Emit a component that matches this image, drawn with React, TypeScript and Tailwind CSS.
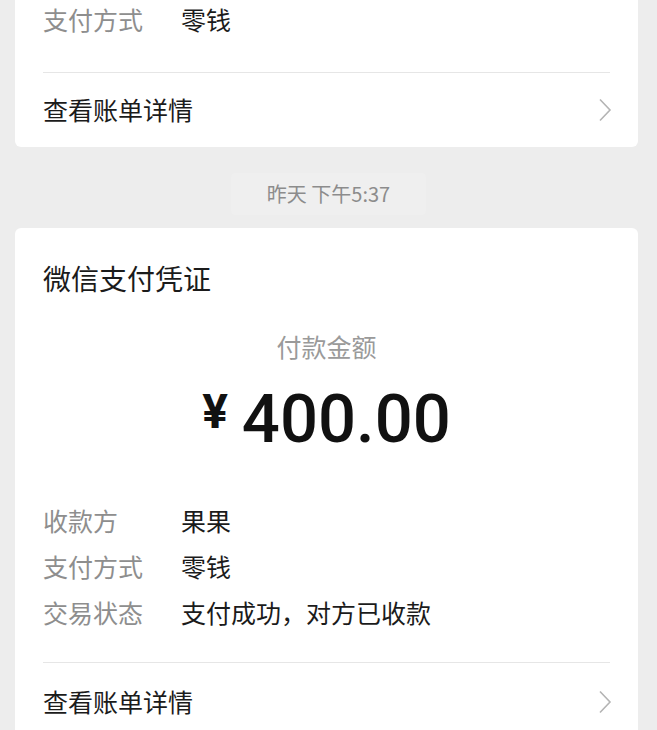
import React from "react";

const CJK = { fontFamily: '"Noto Sans CJK SC", "Noto Sans", sans-serif' };

function Chevron() {
  return (
    <svg width="14" height="24" viewBox="0 0 14 24" className="shrink-0">
      <polyline points="2,1.5 12,12 2,22.5" fill="none" stroke="#b4b4b4" strokeWidth="1.6" strokeLinejoin="miter" />
    </svg>
  );
}

function Row({ label, value }: { label: string; value: string }) {
  return (
    <div className="flex h-[46px] items-center text-[25px]">
      <div className="w-[138px] shrink-0 text-[#8e8e8e]">{label}</div>
      <div className="text-[#1b1b1b]">{value}</div>
    </div>
  );
}

export default function App() {
  return (
    <div className="min-h-[730px] w-full overflow-hidden bg-[#ededed]" style={CJK}>
      {/* Top card (continues above the viewport) */}
      <div className="ml-[15px] mr-[19px] rounded-b-[6px] bg-white px-[28px]">
        <div className="flex h-[40px] items-center text-[25px]">
          <div className="w-[138px] shrink-0 text-[#8e8e8e]">支付方式</div>
          <div className="text-[#1b1b1b]">零钱</div>
        </div>
        <div className="mt-[32px] h-px bg-[#e6e6e6]" />
        <div className="flex h-[74px] items-center justify-between text-[25px] text-[#1b1b1b]">
          <span>查看账单详情</span>
          <span className="mr-[-2px]"><Chevron /></span>
        </div>
      </div>

      {/* Timestamp */}
      <div className="mt-[26px] mb-[13px] flex justify-center">
        <div className="flex h-[42px] w-[195px] items-center justify-center rounded-[4px] bg-[#efefef] text-[20px] text-[#8c8c8c]">
          昨天 下午5:37
        </div>
      </div>

      {/* Second card */}
      <div className="ml-[15px] mr-[19px] rounded-[6px] bg-white px-[28px] pt-[30px] pb-[20px]">
        <div className="flex h-[40px] items-center text-[28px] text-[#1b1b1b]">微信支付凭证</div>
        <div className="mt-[31px] flex h-[36px] items-center justify-center text-[25px] text-[#9a9a9a]">付款金额</div>
        <div className="mt-[21px] flex h-[68px] items-start justify-center text-[#111]" style={{ fontFamily: 'Roboto, "Liberation Sans", sans-serif' }}>
          <span className="mt-[2px] mr-[14px] text-[48px] font-bold leading-none">¥</span>
          <span className="text-[67px] font-medium leading-none">400.00</span>
        </div>
        <div className="mt-[44px]">
          <Row label="收款方" value="果果" />
          <Row label="支付方式" value="零钱" />
          <Row label="交易状态" value="支付成功，对方已收款" />
        </div>
        <div className="mt-[26px] h-px bg-[#e6e6e6]" />
        <div className="flex h-[78px] items-center justify-between text-[25px] text-[#1b1b1b]">
          <span>查看账单详情</span>
          <span className="mr-[-2px]"><Chevron /></span>
        </div>
      </div>
    </div>
  );
}
